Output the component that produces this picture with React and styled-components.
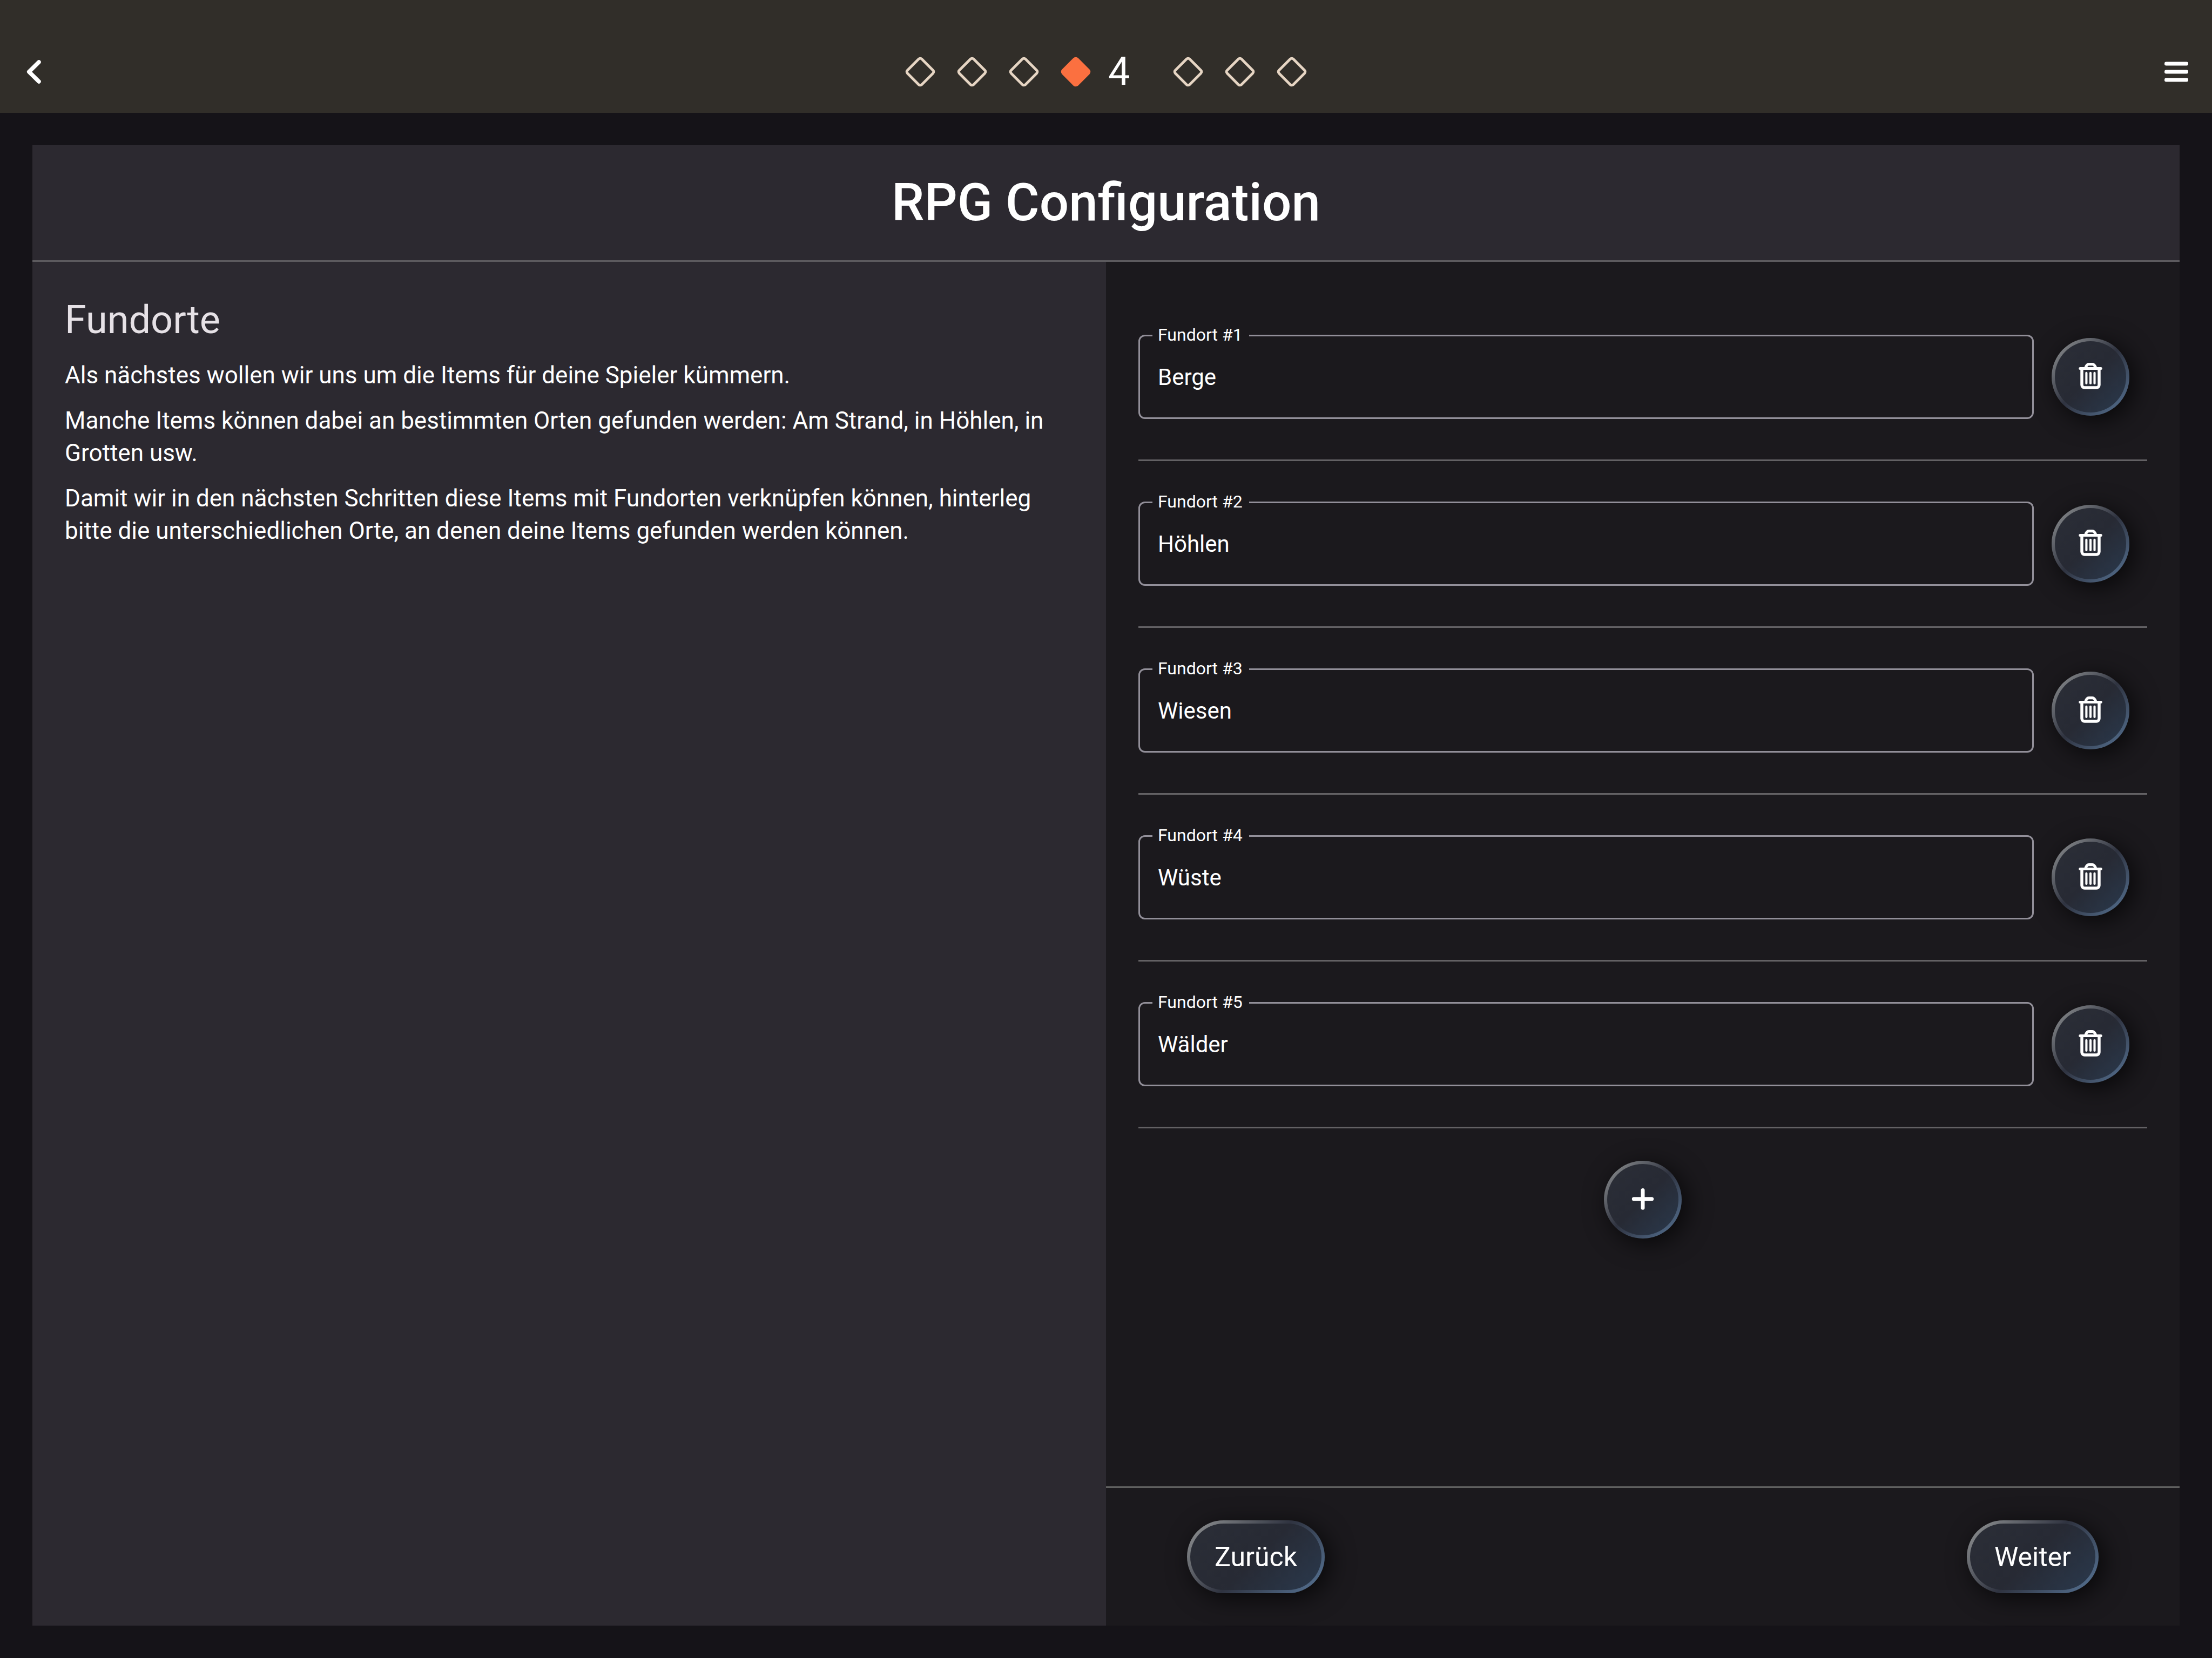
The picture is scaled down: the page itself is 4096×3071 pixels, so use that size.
import React, { useState } from "react";
import styled, { createGlobalStyle } from "styled-components";

const GlobalStyle = createGlobalStyle`
  *, *::before, *::after { box-sizing: border-box; }
  body {
    margin: 0;
    background: #151318;
    color: #fff;
    font-family: Roboto, "Liberation Sans", sans-serif;
    font-size: 42px;
    line-height: 60px;
  }
  h1, h2, p, ol, ul { margin: 0; padding: 0; font-weight: 400; }
  ol, ul { list-style: none; }
`;

const Screen = styled.div`
  display: flex;
  flex-direction: column;
  min-height: 100vh;
`;

const TopBar = styled.header`
  display: grid;
  grid-template-columns: 1fr auto 1fr;
  align-items: center;
  height: 209px;
  padding: 56px 44px 0;
  background: #312e29;
`;

const BarButton = styled.button`
  display: flex;
  justify-self: ${(p) => p.$side};
  padding: 0;
  border: 0;
  background: none;
  color: #fff;
  cursor: pointer;
`;

const Steps = styled.ol`
  display: flex;
  align-items: center;
  gap: 24px;
`;

const Step = styled.li`
  display: flex;
  align-items: center;
  color: ${(p) => (p.$active ? "#fb7040" : "#e6d5c3")};
`;

const StepNumber = styled.span`
  width: 112px;
  padding-left: 24px;
  color: #fff;
  font-size: 72px;
  line-height: 72px;
`;

const Panel = styled.main`
  display: flex;
  flex: 1;
  flex-direction: column;
  margin: 60px;
`;

const PanelHeader = styled.div`
  padding: 48px 60px;
  border-bottom: 3px solid #5c5a5e;
  background: #2c2930;
  text-align: center;
`;

const Title = styled.h1`
  && { font-weight: 500; }
  font-size: 96px;
  line-height: 117px;
`;

const Columns = styled.div`
  display: grid;
  flex: 1;
  grid-template-columns: 1fr 1fr;
`;

const Info = styled.section`
  display: flex;
  flex-direction: column;
  gap: 24px;
  padding: 60px;
  background: #2c2930;
  font-size: 44px;
`;

const InfoTitle = styled.h2`
  color: #e6e1e6;
  font-size: 72px;
  line-height: 96px;
`;

const Editor = styled.form`
  display: flex;
  flex-direction: column;
  background: #1b191d;
`;

const Body = styled.div`
  flex: 1;
  display: flex;
  flex-direction: column;
  gap: 60px;
  padding: 60px;
`;

const Row = styled.li`
  display: flex;
  align-items: center;
  gap: 33px;
  height: 309px;
  padding-right: 33px;
  border-bottom: 3px solid #636164;
`;

const Field = styled.div`
  position: relative;
  flex: 1;
`;

const FieldLabel = styled.label`
  position: absolute;
  top: -18px;
  left: 26px;
  padding: 0 12px 0 10px;
  background: #1b191d;
  font-size: 32px;
  line-height: 36px;
`;

const FieldInput = styled.input`
  display: block;
  width: 100%;
  height: 156px;
  padding: 0 33px;
  border: 3px solid #928f99;
  border-radius: 12px;
  outline: none;
  background: transparent;
  color: #fff;
  font: inherit;
`;

const GlowButton = styled.button`
  display: flex;
  align-items: center;
  justify-content: center;
  align-self: center;
  flex: none;
  width: ${(p) => (p.$round ? "144px" : "auto")};
  height: ${(p) => (p.$round ? "144px" : "135px")};
  padding: ${(p) => (p.$round ? "0" : "0 45px")};
  border: 6px solid transparent;
  border-radius: 72px;
  background:
    linear-gradient(135deg, #2b2e37, #272a34 50%, #2a394d) padding-box,
    linear-gradient(135deg, #969898, #2f3340 50%, #587698) border-box;
  box-shadow: 9px 9px 45px rgba(0, 0, 0, 0.7);
  color: #fff;
  font: inherit;
  font-size: 50px;
  cursor: pointer;
`;

const Footer = styled.footer`
  display: flex;
  justify-content: space-between;
  padding: 60px 150px;
  border-top: 3px solid #606060;
`;

const Diamond = ({ filled }) => (
  <svg width="72" height="72" viewBox="0 0 72 72" aria-hidden="true">
    <path
      d="M33.2 12.3 12.3 33.2a4 4 0 0 0 0 5.6L33.2 59.7a4 4 0 0 0 5.6 0L59.7 38.8a4 4 0 0 0 0-5.6L38.8 12.3a4 4 0 0 0-5.6 0Z"
      fill={filled ? "currentColor" : "none"}
      stroke="currentColor"
      strokeWidth="4.8"
    />
  </svg>
);

const ChevronIcon = () => (
  <svg width="38" height="60" viewBox="0 0 38 60" fill="none" aria-hidden="true">
    <path d="M28 12 9.7 30 28 48" stroke="currentColor" strokeWidth="7.5" strokeLinecap="round" strokeLinejoin="round" />
  </svg>
);

const MenuIcon = () => (
  <svg width="44" height="60" viewBox="0 0 44 60" fill="currentColor" aria-hidden="true">
    <rect y="11.5" width="44" height="7" rx="3.2" />
    <rect y="26.5" width="44" height="7" rx="3.2" />
    <rect y="41.5" width="44" height="7" rx="3.2" />
  </svg>
);

const TrashIcon = () => (
  <svg width="54" height="54" viewBox="0 0 54 54" fill="none" stroke="currentColor" strokeLinecap="round" aria-hidden="true">
    <path d="M7.8 11.5H46.2" strokeWidth="5" />
    <path d="M11 12V42a5 5 0 0 0 5 5H38a5 5 0 0 0 5-5V12" strokeWidth="5.4" />
    <path d="M17.8 10.5Q20 3.6 24 3.6H30.4Q34.4 3.6 36.8 10.5" strokeWidth="5.2" />
    <path d="M19.4 19.8V39M27 19.8V39M34.5 19.8V39" strokeWidth="4.1" />
  </svg>
);

const PlusIcon = () => (
  <svg width="42" height="42" viewBox="0 0 42 42" stroke="currentColor" strokeWidth="7" strokeLinecap="round" aria-hidden="true">
    <path d="M21 3.5V36.2M4.3 19.7H37.7" />
  </svg>
);

const STEP_COUNT = 7;
const CURRENT_STEP = 4;

export default function App() {
  const [places, setPlaces] = useState(["Berge", "Höhlen", "Wiesen", "Wüste", "Wälder"]);
  const rename = (index, value) => setPlaces(places.map((p, i) => (i === index ? value : p)));
  const remove = (index) => setPlaces(places.filter((_, i) => i !== index));

  return (
    <Screen>
      <GlobalStyle />
      <TopBar>
        <BarButton type="button" $side="start" aria-label="Zurück">
          <ChevronIcon />
        </BarButton>
        <Steps>
          {Array.from({ length: STEP_COUNT }, (_, i) => i + 1).map((n) => (
            <Step key={n} $active={n === CURRENT_STEP}>
              <Diamond filled={n === CURRENT_STEP} />
              {n === CURRENT_STEP && <StepNumber>{n}</StepNumber>}
            </Step>
          ))}
        </Steps>
        <BarButton type="button" $side="end" aria-label="Menü">
          <MenuIcon />
        </BarButton>
      </TopBar>

      <Panel>
        <PanelHeader>
          <Title>RPG Configuration</Title>
        </PanelHeader>
        <Columns>
          <Info>
            <InfoTitle>Fundorte</InfoTitle>
            <p>Als nächstes wollen wir uns um die Items für deine Spieler kümmern.</p>
            <p>
              Manche Items können dabei an bestimmten Orten gefunden werden: Am Strand, in Höhlen, in Grotten usw.
            </p>
            <p>
              Damit wir in den nächsten Schritten diese Items mit Fundorten verknüpfen können, hinterleg bitte die
              unterschiedlichen Orte, an denen deine Items gefunden werden können.
            </p>
          </Info>
          <Editor onSubmit={(e) => e.preventDefault()}>
            <Body>
              <ul>
                {places.map((place, i) => (
                  <Row key={i}>
                    <Field>
                      <FieldInput id={`place-${i}`} value={place} onChange={(e) => rename(i, e.target.value)} />
                      <FieldLabel htmlFor={`place-${i}`}>Fundort #{i + 1}</FieldLabel>
                    </Field>
                    <GlowButton type="button" $round aria-label="Löschen" onClick={() => remove(i)}>
                      <TrashIcon />
                    </GlowButton>
                  </Row>
                ))}
              </ul>
              <GlowButton type="button" $round aria-label="Hinzufügen" onClick={() => setPlaces([...places, ""])}>
                <PlusIcon />
              </GlowButton>
            </Body>
            <Footer>
              <GlowButton type="button">Zurück</GlowButton>
              <GlowButton type="submit">Weiter</GlowButton>
            </Footer>
          </Editor>
        </Columns>
      </Panel>
    </Screen>
  );
}
